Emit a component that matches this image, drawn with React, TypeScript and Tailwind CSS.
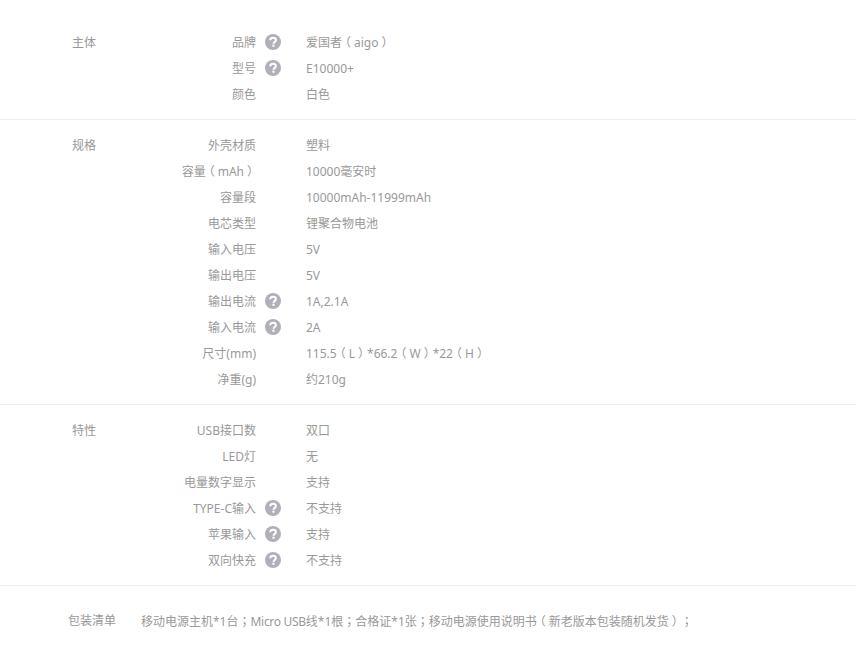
type Spec = { name: string; value: string; help?: boolean }

const groups: { title: string; specs: Spec[] }[] = [
  {
    title: '主体',
    specs: [
      { name: '品牌', value: '爱国者（aigo）', help: true },
      { name: '型号', value: 'E10000+', help: true },
      { name: '颜色', value: '白色' },
    ],
  },
  {
    title: '规格',
    specs: [
      { name: '外壳材质', value: '塑料' },
      { name: '容量（mAh）', value: '10000毫安时' },
      { name: '容量段', value: '10000mAh-11999mAh' },
      { name: '电芯类型', value: '锂聚合物电池' },
      { name: '输入电压', value: '5V' },
      { name: '输出电压', value: '5V' },
      { name: '输出电流', value: '1A,2.1A', help: true },
      { name: '输入电流', value: '2A', help: true },
      { name: '尺寸(mm)', value: '115.5（L）*66.2（W）*22（H）' },
      { name: '净重(g)', value: '约210g' },
    ],
  },
  {
    title: '特性',
    specs: [
      { name: 'USB接口数', value: '双口' },
      { name: 'LED灯', value: '无' },
      { name: '电量数字显示', value: '支持' },
      { name: 'TYPE-C输入', value: '不支持', help: true },
      { name: '苹果输入', value: '支持', help: true },
      { name: '双向快充', value: '不支持', help: true },
    ],
  },
]

// full-width punctuation sits centred in its em box in the reference font:
// halt trims the parens to half width, the padding gives the em back evenly
function Text({ children }: { children: string }) {
  return (
    <>
      {children.split(/([（）；])/).map((part, i) => {
        if (part === '；') return <span key={i} className="font-['Noto_Sans_CJK_TC',sans-serif]">{part}</span>
        if (part === '（' || part === '）') {
          return <span key={i} className="px-[3px] [font-feature-settings:'halt']">{part}</span>
        }
        return part
      })}
    </>
  )
}

function HelpIcon() {
  return (
    <svg width="16" height="16" viewBox="0 0 16 16">
      <circle cx="8" cy="8" r="8" fill="#b0b0bb" />
      <path d="M5.2 6.3c0-1.6 1.2-2.6 2.8-2.6s2.9.9 2.9 2.4c0 2-2.4 2-2.4 3.6" fill="none" stroke="#fff" strokeWidth="2" />
      <rect x="7.4" y="10.7" width="2.1" height="2.1" fill="#fff" />
    </svg>
  )
}

export default function App() {
  return (
    <div className="min-h-[647px] bg-white text-xs text-[#999] font-['Noto_Sans','Noto_Sans_CJK_SC',sans-serif]">
      <div className="pt-[17px]">
        {groups.map((group) => (
          <div key={group.title} className="flex border-b border-[#eee] py-3 pl-[72px]">
            <div className="w-[60px] pt-px leading-[26px]">{group.title}</div>
            <div>
              {group.specs.map((spec) => (
                <div key={spec.name} className="flex h-[26px] items-center">
                  <div className="w-[124px] pt-[2px] text-right"><Text>{spec.name}</Text></div>
                  <div className="flex w-[50px] pl-[9px]">
                    {spec.help && <HelpIcon />}
                  </div>
                  <div className="pt-[2px]"><Text>{spec.value}</Text></div>
                </div>
              ))}
            </div>
          </div>
        ))}
      </div>
      <div className="flex pl-[68px] pt-[26px] leading-[18px]">
        <div className="w-[73px]">包装清单</div>
        <div>
          <Text>移动电源主机*1台；</Text>
          <span className="tracking-[-0.3px]">Micro USB</span>
          <Text>线*1根；合格证*1张；移动电源使用说明书（新老版本包装随机发货）；</Text>
        </div>
      </div>
    </div>
  )
}
